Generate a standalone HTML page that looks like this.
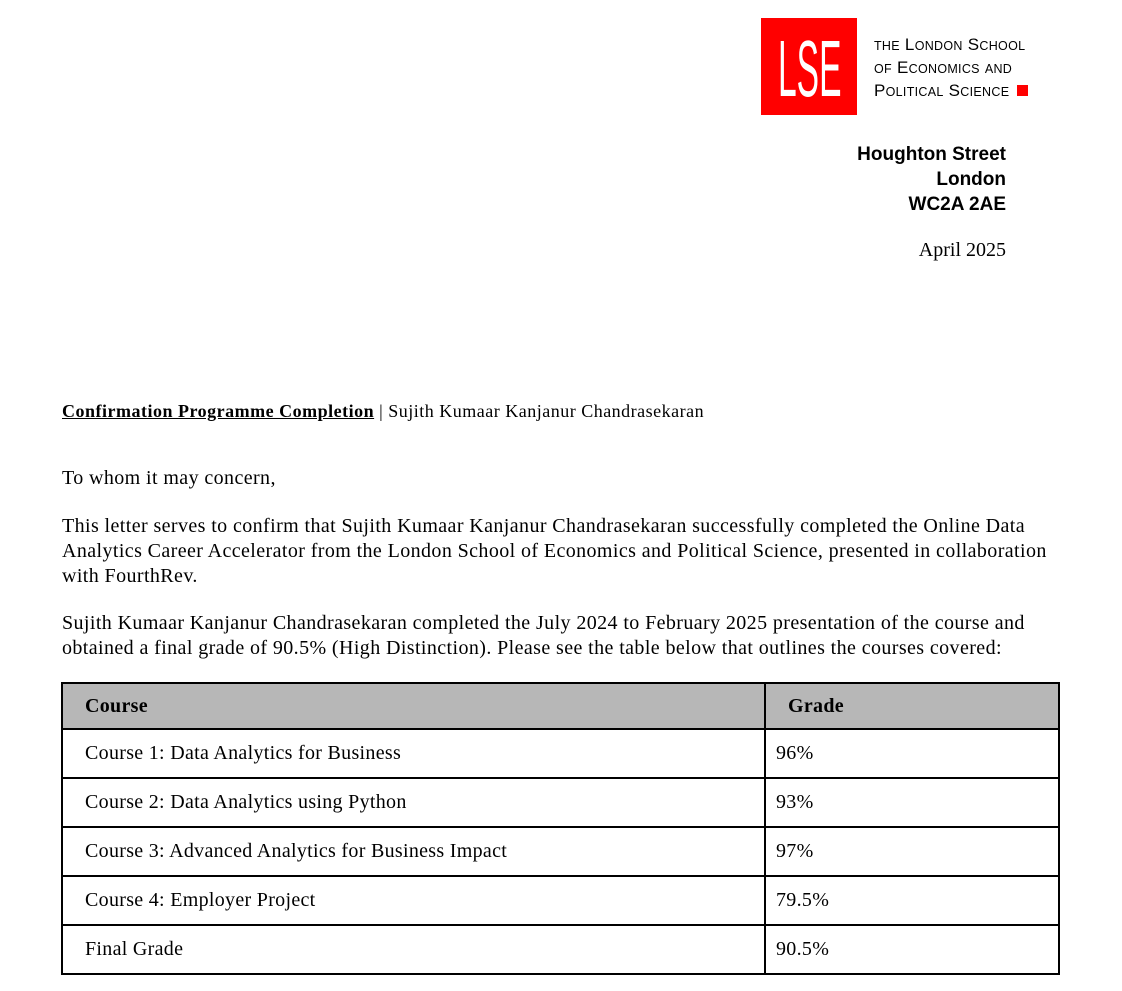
<!DOCTYPE html>
<html><head><style>
body{margin:0;width:1122px;height:991px;background:#fff;position:relative;font-family:"Liberation Serif",serif;color:#000;overflow:hidden}
.a{position:absolute;white-space:nowrap}
.s{font-size:20px;letter-spacing:0.4px}
.logo{position:absolute;left:761px;top:18px;width:96px;height:97px;background:#f00;overflow:hidden}
.logo span{position:absolute;left:17px;top:11px;color:#fff;font-family:"Liberation Sans",sans-serif;font-size:80px;line-height:80px;letter-spacing:0;transform:scaleX(.42);transform-origin:left top}
.lt{font-family:"Liberation Sans",sans-serif;font-size:17px;left:874px;top:33px;letter-spacing:0.3px}
.lt div{height:23px;line-height:23px}
.lt small{font-size:12.5px}
.addr{font-family:"Liberation Sans",sans-serif;font-weight:bold;font-size:19px;line-height:25px;right:116px;top:142px;text-align:right}
table{position:absolute;left:61px;top:682px;width:999px;border-collapse:collapse;font-size:20px;letter-spacing:0.3px}
td{border:2px solid #000;height:47px;padding:0 0 0 22px}
tr.h td{background:#b7b7b7;font-weight:bold;height:44px}
td.g{padding-left:10px}
tr.h td.g{padding-left:22px}
</style></head><body>
<div class="logo"><span>LSE</span></div>
<div class="a lt"><div><small>THE</small> L<small>ONDON</small> S<small>CHOOL</small></div><div><small>OF</small> E<small>CONOMICS</small> <small>AND</small></div><div>P<small>OLITICAL</small> S<small>CIENCE</small> <span style="display:inline-block;width:11px;height:11px;background:#f00;margin-left:3px"></span></div></div>
<div class="a addr">Houghton Street<br>London<br>WC2A 2AE</div>
<div class="a s" style="right:116px;top:239px;letter-spacing:0">April 2025</div>
<div class="a" style="left:62px;top:401px;font-size:18px;letter-spacing:0.5px"><b><u>Confirmation Programme Completion</u></b> | Sujith Kumaar Kanjanur Chandrasekaran</div>
<div class="a s" style="left:62px;top:467px">To whom it may concern,</div>
<div class="a s" style="left:62px;top:514px;line-height:25px">This letter serves to confirm that Sujith Kumaar Kanjanur Chandrasekaran successfully completed the Online Data<br>Analytics Career Accelerator from the London School of Economics and Political Science, presented in collaboration<br>with FourthRev.</div>
<div class="a s" style="left:62px;top:611px;line-height:25px">Sujith Kumaar Kanjanur Chandrasekaran completed the July 2024 to February 2025 presentation of the course and<br>obtained a final grade of 90.5% (High Distinction). Please see the table below that outlines the courses covered:</div>
<table>
<tr class="h"><td style="width:679px">Course</td><td class="g">Grade</td></tr>
<tr><td>Course 1: Data Analytics for Business</td><td class="g">96%</td></tr>
<tr><td>Course 2: Data Analytics using Python</td><td class="g">93%</td></tr>
<tr><td>Course 3: Advanced Analytics for Business Impact</td><td class="g">97%</td></tr>
<tr><td>Course 4: Employer Project</td><td class="g">79.5%</td></tr>
<tr><td>Final Grade</td><td class="g">90.5%</td></tr>
</table>
</body></html>
